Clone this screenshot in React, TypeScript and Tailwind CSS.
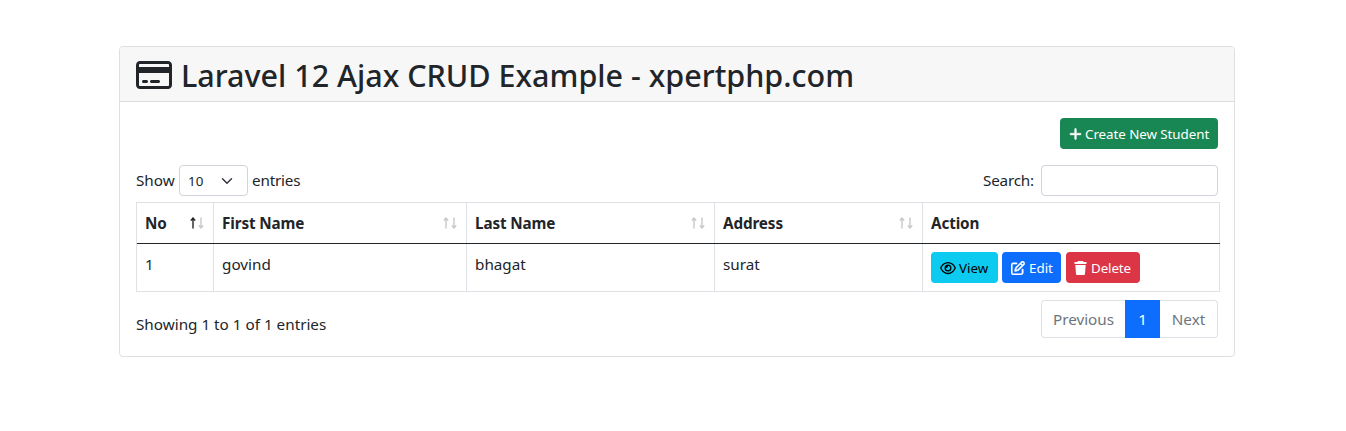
import type { ReactNode } from "react";
import { FaPlus, FaRegCreditCard, FaRegEye, FaRegPenToSquare } from "react-icons/fa6";

function SortArrows({ ascending = false }: { ascending?: boolean }) {
  return (
    <svg viewBox="0 0 16 12" className="h-3 w-4 shrink-0" fill="none" stroke="#212529">
      <path d="M4 11.5V1M1.8 3.6L4 1L6.2 3.6" strokeWidth="1.4" opacity={ascending ? 1 : 0.25} />
      <path d="M12 0.5V11M9.8 8.4L12 11L14.2 8.4" strokeWidth="1.4" opacity="0.25" />
    </svg>
  );
}

function HeadCell({ children, sortable = true, ascending = false }: { children: ReactNode; sortable?: boolean; ascending?: boolean }) {
  return (
    <div className="flex h-10 items-center justify-between border-r border-[#dee2e6] pr-2 pl-2 font-bold tracking-[-0.12px]">
      <span>{children}</span>
      {sortable && <SortArrows ascending={ascending} />}
    </div>
  );
}

function Cell({ children }: { children: ReactNode }) {
  return <div className="h-[47px] border-r border-[#dee2e6] pt-2 pl-2 leading-6">{children}</div>;
}

function TrashIcon() {
  return (
    <svg viewBox="0 0 13 14" className="h-3.5 w-[13px]" fill="currentColor">
      <path d="M4 0h5l.6 1H12.5V3H.5V1H3.4zM1.3 4h10.4l-.7 9a1.1 1.1 0 0 1-1.1 1H3.1A1.1 1.1 0 0 1 2 13z" />
    </svg>
  );
}

const columns = "grid grid-cols-[77px_253px_248px_208px_297px]";

export default function App() {
  return (
    <div className="h-[431px] bg-white pt-[46px] pl-[119px] font-['Noto_Sans',sans-serif] text-[15.25px] leading-6 text-[#212529]">
      <div className="h-[311px] w-[1116px] overflow-hidden rounded-[4px] border border-[#dfdfdf]">
        <header className="flex h-[55px] items-center border-b border-[#dadbdb] bg-[#f7f7f7] pt-[2px] pl-4">
          <FaRegCreditCard className="h-8 w-9" />
          <h2 className="ml-[9px] text-[30.5px] leading-[38px] font-medium whitespace-nowrap">Laravel 12 Ajax CRUD Example - xpertphp.com</h2>
        </header>
        <main className="px-4 pt-4">
          <div className="flex justify-end">
            <button className="flex h-[31px] w-[158px] items-center rounded-[4px] bg-[#198754] pl-[9px] text-[13.35px] tracking-[-0.05px] whitespace-nowrap text-white">
              <FaPlus className="mr-[3px] h-3.5 w-[13px] stroke-current [stroke-width:16px]" />
              Create New Student
            </button>
          </div>
          <div className="mt-4 flex h-[31px] items-center justify-between">
            <label className="flex items-center">
              <span className="w-[43px] pb-0.5">Show</span>
              <span className="flex h-[31px] w-[69px] items-center justify-between rounded-[4px] border border-[#ced4da] pr-[14px] pl-2 text-[13.35px]">
                10
                <svg viewBox="0 0 16 16" className="h-3 w-3" fill="none" stroke="#343a40" strokeWidth="2" strokeLinecap="round" strokeLinejoin="round">
                  <path d="m2 5 6 6 6-6" />
                </svg>
              </span>
              <span className="ml-1 pb-0.5 tracking-[-0.2px]">entries</span>
            </label>
            <label className="flex items-center">
              <span className="mr-[7px] pb-0.5 tracking-[-0.2px]">Search:</span>
              <input className="h-[31px] w-[177px] rounded-[4px] border border-[#ced4da] px-2" />
            </label>
          </div>
          <section className="mt-1.5 w-[1084px] border border-r-0 border-[#dee2e6]">
            <div className={`${columns} border-b border-b-[#212529]`}>
              <HeadCell ascending>No</HeadCell>
              <HeadCell>First Name</HeadCell>
              <HeadCell>Last Name</HeadCell>
              <HeadCell>Address</HeadCell>
              <HeadCell sortable={false}>Action</HeadCell>
            </div>
            <div className={columns}>
              <Cell>1</Cell>
              <Cell>govind</Cell>
              <Cell>bhagat</Cell>
              <Cell>surat</Cell>
              <div className="flex h-[47px] items-start border-r border-[#dee2e6] pt-2 pl-2 text-[13.35px] text-white">
                <button className="mr-1 flex h-[31px] w-[67px] items-center rounded-[4px] bg-[#0dcaf0] pl-[9px] text-black">
                  <FaRegEye className="mr-[3px] h-3.5 w-4" />
                  View
                </button>
                <button className="mr-[5px] flex h-[31px] w-[59px] items-center rounded-[4px] bg-[#0d6efd] pl-[9px]">
                  <FaRegPenToSquare className="mr-1 h-3.5 w-3.5 stroke-current [stroke-width:18px]" />
                  Edit
                </button>
                <button className="flex h-[31px] w-[74px] items-center rounded-[4px] bg-[#dc3545] pl-2">
                  <TrashIcon />
                  <span className="ml-1 tracking-[-0.1px]">Delete</span>
                </button>
              </div>
            </div>
          </section>
          <footer className="flex justify-between pt-2">
            <p className="pt-3">Showing 1 to 1 of 1 entries</p>
            <nav className="flex h-[38px] items-center text-center text-[#6c757d]">
              <span className="h-[38px] w-[84px] rounded-l-[4px] border border-r-0 border-[#dee2e6] leading-9">Previous</span>
              <span className="h-[38px] w-[35px] bg-[#0d6efd] leading-[38px] text-white">1</span>
              <span className="h-[38px] w-[58px] rounded-r-[4px] border border-l-0 border-[#dee2e6] leading-9">Next</span>
            </nav>
          </footer>
        </main>
      </div>
    </div>
  );
}
